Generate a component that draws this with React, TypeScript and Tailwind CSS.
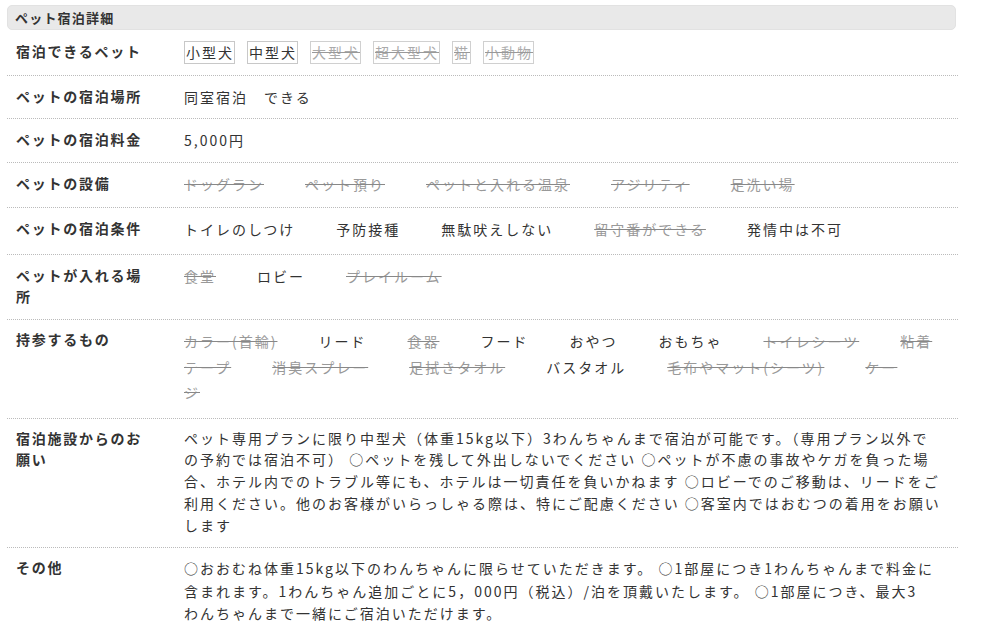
import type { ReactNode } from "react";

type Item = { text: string; ok: boolean };

const petTypes: Item[] = [
  { text: "小型犬", ok: true },
  { text: "中型犬", ok: true },
  { text: "大型犬", ok: false },
  { text: "超大型犬", ok: false },
  { text: "猫", ok: false },
  { text: "小動物", ok: false },
];

const facilities: Item[] = [
  { text: "ドッグラン", ok: false },
  { text: "ペット預り", ok: false },
  { text: "ペットと入れる温泉", ok: false },
  { text: "アジリティ", ok: false },
  { text: "足洗い場", ok: false },
];

const conditions: Item[] = [
  { text: "トイレのしつけ", ok: true },
  { text: "予防接種", ok: true },
  { text: "無駄吠えしない", ok: true },
  { text: "留守番ができる", ok: false },
  { text: "発情中は不可", ok: true },
];

const places: Item[] = [
  { text: "食堂", ok: false },
  { text: "ロビー", ok: true },
  { text: "プレイルーム", ok: false },
];

const belongings: Item[] = [
  { text: "カラー(首輪)", ok: false },
  { text: "リード", ok: true },
  { text: "食器", ok: false },
  { text: "フード", ok: true },
  { text: "おやつ", ok: true },
  { text: "おもちゃ", ok: true },
  { text: "トイレシーツ", ok: false },
  { text: "粘着テープ", ok: false },
  { text: "消臭スプレー", ok: false },
  { text: "足拭きタオル", ok: false },
  { text: "バスタオル", ok: true },
  { text: "毛布やマット(シーツ)", ok: false },
  { text: "ケージ", ok: false },
];

function Row({
  label,
  children,
  pad,
  leading = "leading-[22px]",
  edge = "",
}: {
  label: string;
  children: ReactNode;
  pad: string;
  leading?: string;
  edge?: string;
}) {
  return (
    <div className={`flex border-b border-dotted border-[#bbbbbb] pl-[9px] pr-[8px] ${pad}`}>
      <div className="w-[168px] shrink-0 pr-[33px] text-[14px] font-bold leading-[21px] tracking-[1.75px] text-[#333]">
        {label}
      </div>
      <div className={`min-w-0 flex-1 text-[14px] tracking-[2px] text-[#333] ${leading} ${edge}`}>
        {children}
      </div>
    </div>
  );
}

function Items({ items }: { items: Item[] }) {
  return (
    <>
      {items.map((item) => (
        <span
          key={item.text}
          className={item.ok ? "mr-[41px] text-[#333]" : "mr-[41px] text-[#999] line-through decoration-[#888]"}
        >
          {item.text}
        </span>
      ))}
    </>
  );
}

export default function App() {
  return (
    <div className="min-h-screen bg-white pt-[5px] pl-[7px] font-['Noto_Sans_CJK_JP',sans-serif]">
      <div className="w-[951px]">
        {/* 見出し */}
        <div className="flex h-[25px] w-[949px] items-center rounded-[5px] border border-[#e2e2e2] bg-[#e9e9e9] pl-[7px] text-[13px] font-bold tracking-[1.2px] text-[#333]">
          ペット宿泊詳細
        </div>

        <Row label="宿泊できるペット" pad="pt-[11px] pb-[11px]" leading="leading-[21px]">
          {petTypes.map((p) => (
            <span
              key={p.text}
              className={
                p.ok
                  ? "mr-[12px] inline-block border border-[#c8c8c8] pl-[1px] leading-[21px] text-[#333]"
                  : "mr-[12px] inline-block border border-[#d0d0d0] pl-[1px] leading-[21px] text-[#aaa] line-through decoration-[#999]"
              }
            >
              {p.text}
            </span>
          ))}
        </Row>

        <Row label="ペットの宿泊場所" pad="pt-[10px] pb-[10px]">
          同室宿泊　できる
        </Row>

        <Row label="ペットの宿泊料金" pad="pt-[10px] pb-[11px]">
          5,000円
        </Row>

        <Row label="ペットの設備" pad="pt-[10px] pb-[12px]">
          <Items items={facilities} />
        </Row>

        <Row label="ペットの宿泊条件" pad="pt-[10px] pb-[14px]">
          <Items items={conditions} />
        </Row>

        <Row label="ペットが入れる場所" pad="pt-[10px] pb-[12px]">
          <Items items={places} />
        </Row>

        <Row label="持参するもの" pad="pt-[9px] pb-[12px]" leading="leading-[25.5px]" edge="pr-[12px]">
          <Items items={belongings} />
        </Row>

        <Row label="宿泊施設からのお願い" pad="pt-[9px] pb-[11px]" leading="leading-[21.75px]">
          ペット専用プランに限り中型犬（体重15kg以下）3わんちゃんまで宿泊が可能です。（専用プラン以外で
          <br />
          の予約では宿泊不可） ○ペットを残して外出しないでください ○ペットが不慮の事故やケガを負った場
          <br />
          合、ホテル内でのトラブル等にも、ホテルは一切責任を負いかねます ○ロビーでのご移動は、リードをご
          <br />
          利用ください。他のお客様がいらっしゃる際は、特にご配慮ください ○客室内ではおむつの着用をお願い
          <br />
          します
        </Row>

        <div className="flex pl-[9px] pr-[8px] pt-[9px] pb-[10px]">
          <div className="w-[168px] shrink-0 pr-[33px] text-[14px] font-bold leading-[21px] tracking-[1.75px] text-[#333]">
            その他
          </div>
          <div className="min-w-0 flex-1 text-[14px] leading-[22.5px] tracking-[2px] text-[#333]">
            ○おおむね体重15kg以下のわんちゃんに限らせていただきます。 ○1部屋につき1わんちゃんまで料金に
            <br />
            含まれます。1わんちゃん追加ごとに5，000円（税込）/泊を頂戴いたします。 ○1部屋につき、最大3
            <br />
            わんちゃんまで一緒にご宿泊いただけます。
          </div>
        </div>
      </div>
    </div>
  );
}
